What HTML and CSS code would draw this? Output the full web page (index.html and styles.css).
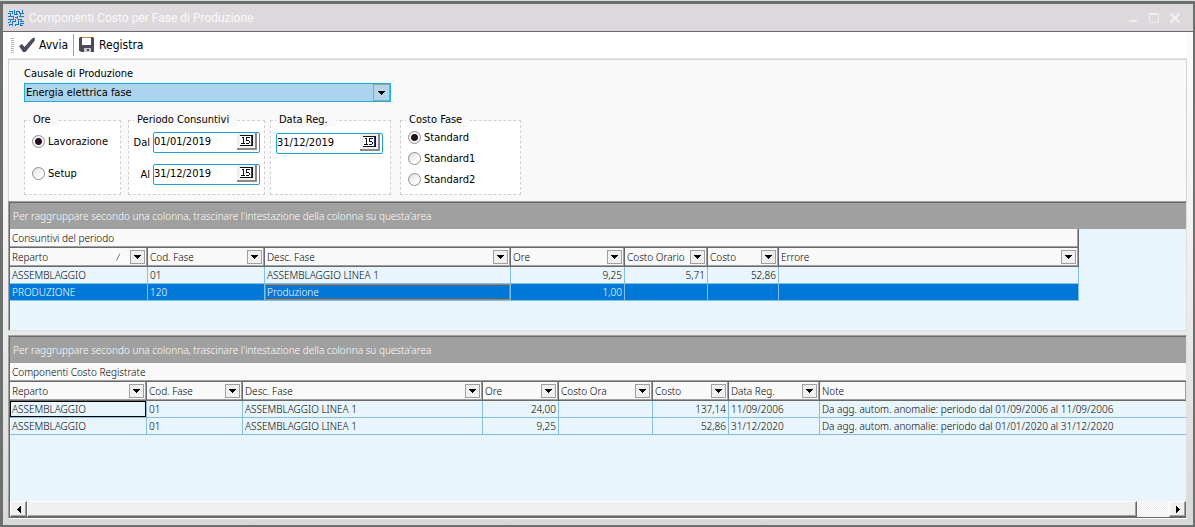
FILE: index.html
```html
<!DOCTYPE html>
<html lang="it">
<head>
<meta charset="utf-8">
<title>Componenti Costo per Fase di Produzione</title>
<link rel="stylesheet" href="styles.css">
</head>
<body>
<svg class="defs" aria-hidden="true">
  <symbol id="down" viewBox="0 0 7 4"><path d="M0 0h7v1h-1v1h-1v1h-1v1h-1v-1h-1v-1h-1v-1h-1z"/></symbol>
  <symbol id="calendar" viewBox="0 0 13 13">
    <g shape-rendering="crispEdges">
      <path fill="#fff" d="M0 1h12v11H0z"/>
      <path fill="#111" d="M0 1h13v1H0zM0 11h13v1H0zM12 1h1v11h-1z"/>
      <path fill="#3a3a78" d="M11 2h1v9h-1z"/>
      <path fill="#111" d="M2 3h2v6h1v1H1V9h2V4H2zM6 3h4v1H7v2h2v1h1v2H9v1H6V9h3V7H6z"/>
    </g>
  </symbol>
</svg>
<div class="window">
  <header class="titlebar">
    <svg class="app-icon" viewBox="0 0 16 16" aria-hidden="true">
      <path fill="none" stroke="#1677d2" shape-rendering="crispEdges" d="M1 1.500h4M4.500 1v3M0 3.500h3M2.500 3v4M0 6.500h5M6.500 0v5M6 4.500h4M8.500 1v4M8 1.500h4M11.500 1v3M14.500 0v4M13 3.500h3M12.500 3v4M7 7.500h3M9.500 6v3M11 6.500h5M5.500 6v4M0 9.500h6M2.500 9v3M0 12.500h2M4.500 11v5M4 11.500h4M7.500 9v3M1 14.500h4M7 14.500h4M7.500 14v2M10.500 10v5M10 9.500h4M13.500 9v3M12 11.500h4M12.500 13v3M12 13.500h4M12 15.500h3M1 15.500h1"/>
    </svg>
    <h1 class="title">Componenti Costo per Fase di Produzione</h1>
    <div class="window-buttons">
      <button class="window-button" aria-label="Riduci a icona"><svg viewBox="0 0 10 10"><path fill="none" stroke="currentColor" stroke-width="2" d="M1 8h8"/></svg></button>
      <button class="window-button" aria-label="Ingrandisci"><svg viewBox="0 0 10 10"><path fill="none" stroke="currentColor" d="M.500 .500h9v9h-9zM0 1.500h10"/></svg></button>
      <button class="window-button" aria-label="Chiudi"><svg viewBox="0 0 10 10"><path fill="none" stroke="currentColor" stroke-width="2.500" d="M.500 .500l9 9M9.500 .500l-9 9"/></svg></button>
    </div>
  </header>

  <div class="client">
    <div class="toolbar">
      <span class="grip"></span>
      <button class="tool"><svg class="tool-icon" viewBox="0 0 16 16" aria-hidden="true"><path fill="#4c4b5e" d="M0 9l3-2 2.500 3L13 1.500l3-1L15.500 4 6.500 15H4z"/></svg>Avvia</button>
      <span class="divider"></span>
      <button class="tool"><svg class="tool-icon" viewBox="0 0 16 16" aria-hidden="true"><path fill="#4c4b5e" d="M1 0h13l1 1v14H2l-1-1H0V1z"/><path fill="#fff" d="M3 1h9v7H3z"/><path fill="#d98c2f" d="M3 0h9v1H3z"/><path fill="#c8c8d0" d="M5 11h7v4H5z"/><path fill="#4c4b5e" d="M8 12h2v2H8z"/></svg>Registra</button>
    </div>

    <form class="filters">
      <div class="cause">
        <label for="cause">Causale di Produzione</label>
        <div class="combo">
          <select id="cause" class="combo-box"><option>Energia elettrica fase</option></select>
          <span class="drop combo-drop"><svg class="arrow"><use href="#down"/></svg></span>
        </div>
      </div>
      <div class="groups">
        <fieldset class="group group-hours">
          <legend>Ore</legend>
          <label class="choice"><input class="radio" type="radio" name="hours" checked>Lavorazione</label>
          <label class="choice"><input class="radio" type="radio" name="hours">Setup</label>
        </fieldset>
        <fieldset class="group group-period">
          <legend>Periodo Consuntivi</legend>
          <div class="period-row"><label for="from">Dal</label><span class="date"><input id="from" class="date-text" type="text" value="01/01/2019"><button type="button" class="date-button" aria-label="Calendario"><svg class="cal"><use href="#calendar"/></svg></button></span></div>
          <div class="period-row"><label for="to">Al</label><span class="date"><input id="to" class="date-text" type="text" value="31/12/2019"><button type="button" class="date-button" aria-label="Calendario"><svg class="cal"><use href="#calendar"/></svg></button></span></div>
        </fieldset>
        <fieldset class="group group-date">
          <legend>Data Reg.</legend>
          <span class="date"><input class="date-text" type="text" value="31/12/2019" aria-label="Data Reg."><button type="button" class="date-button" aria-label="Calendario"><svg class="cal"><use href="#calendar"/></svg></button></span>
        </fieldset>
        <fieldset class="group group-cost">
          <legend>Costo Fase</legend>
          <label class="choice"><input class="radio" type="radio" name="cost" checked>Standard</label>
          <label class="choice"><input class="radio" type="radio" name="cost">Standard1</label>
          <label class="choice"><input class="radio" type="radio" name="cost">Standard2</label>
        </fieldset>
      </div>
    </form>

    <section class="grid">
      <div class="group-bar">Per raggruppare secondo una colonna, trascinare l'intestazione della colonna su questa'area</div>
      <div class="grid-body">
        <table class="data period-table">
          <caption>Consuntivi del periodo</caption>
          <colgroup><col class="w138"><col class="w117"><col class="w246"><col class="w114"><col class="w83"><col class="w71"><col class="w300"></colgroup>
          <thead><tr>
            <th><div class="head"><span>Reparto</span><svg class="sort" viewBox="0 0 9 8" aria-hidden="true"><path fill="none" stroke="#fff" d="M4.500 0l4 7.500H0"/><path fill="none" stroke="#777" d="M.500 7.500L4 .500"/></svg><button class="drop" aria-label="Filtra Reparto"><svg class="arrow"><use href="#down"/></svg></button></div></th>
            <th><div class="head"><span>Cod. Fase</span><button class="drop" aria-label="Filtra Cod. Fase"><svg class="arrow"><use href="#down"/></svg></button></div></th>
            <th><div class="head"><span>Desc. Fase</span><button class="drop" aria-label="Filtra Desc. Fase"><svg class="arrow"><use href="#down"/></svg></button></div></th>
            <th><div class="head"><span>Ore</span><button class="drop" aria-label="Filtra Ore"><svg class="arrow"><use href="#down"/></svg></button></div></th>
            <th><div class="head"><span>Costo Orario</span><button class="drop" aria-label="Filtra Costo Orario"><svg class="arrow"><use href="#down"/></svg></button></div></th>
            <th><div class="head"><span>Costo</span><button class="drop" aria-label="Filtra Costo"><svg class="arrow"><use href="#down"/></svg></button></div></th>
            <th><div class="head"><span>Errore</span><button class="drop" aria-label="Filtra Errore"><svg class="arrow"><use href="#down"/></svg></button></div></th>
          </tr></thead>
          <tbody>
            <tr><td>ASSEMBLAGGIO</td><td>01</td><td>ASSEMBLAGGIO LINEA 1</td><td class="num">9,25</td><td class="num">5,71</td><td class="num">52,86</td><td></td></tr>
            <tr class="selected"><td>PRODUZIONE</td><td>120</td><td class="editing">Produzione</td><td class="num">1,00</td><td></td><td></td><td></td></tr>
          </tbody>
        </table>
      </div>
    </section>

    <section class="grid grid-last">
      <div class="group-bar">Per raggruppare secondo una colonna, trascinare l'intestazione della colonna su questa'area</div>
      <div class="grid-body">
        <table class="data posted-table">
          <caption>Componenti Costo Registrate</caption>
          <colgroup><col class="w137"><col class="w96"><col class="w240"><col class="w76"><col class="w94"><col class="w76"><col class="w91"><col></colgroup>
          <thead><tr>
            <th><div class="head"><span>Reparto</span><button class="drop" aria-label="Filtra Reparto"><svg class="arrow"><use href="#down"/></svg></button></div></th>
            <th><div class="head"><span>Cod. Fase</span><button class="drop" aria-label="Filtra Cod. Fase"><svg class="arrow"><use href="#down"/></svg></button></div></th>
            <th><div class="head"><span>Desc. Fase</span><button class="drop" aria-label="Filtra Desc. Fase"><svg class="arrow"><use href="#down"/></svg></button></div></th>
            <th><div class="head"><span>Ore</span><button class="drop" aria-label="Filtra Ore"><svg class="arrow"><use href="#down"/></svg></button></div></th>
            <th><div class="head"><span>Costo Ora</span><button class="drop" aria-label="Filtra Costo Ora"><svg class="arrow"><use href="#down"/></svg></button></div></th>
            <th><div class="head"><span>Costo</span><button class="drop" aria-label="Filtra Costo"><svg class="arrow"><use href="#down"/></svg></button></div></th>
            <th><div class="head"><span>Data Reg.</span><button class="drop" aria-label="Filtra Data Reg."><svg class="arrow"><use href="#down"/></svg></button></div></th>
            <th><div class="head"><span>Note</span></div></th>
          </tr></thead>
          <tbody>
            <tr><td class="focused">ASSEMBLAGGIO</td><td>01</td><td>ASSEMBLAGGIO LINEA 1</td><td class="num">24,00</td><td></td><td class="num">137,14</td><td>11/09/2006</td><td>Da agg. autom. anomalie: periodo dal 01/09/2006 al 11/09/2006</td></tr>
            <tr><td>ASSEMBLAGGIO</td><td>01</td><td>ASSEMBLAGGIO LINEA 1</td><td class="num">9,25</td><td></td><td class="num">52,86</td><td>31/12/2020</td><td>Da agg. autom. anomalie: periodo dal 01/01/2020 al 31/12/2020</td></tr>
          </tbody>
        </table>
      </div>
      <div class="scrollbar">
        <button class="scroll-button" aria-label="Scorri a sinistra"><svg class="scroll-arrow" viewBox="0 0 4 7"><path d="M4 0v7h-1v-1h-1v-1h-1v-1h-1v-1h1v-1h1v-1h1v-1z"/></svg></button>
        <span class="thumb"></span><span class="track"></span>
        <button class="scroll-button" aria-label="Scorri a destra"><svg class="scroll-arrow" viewBox="0 0 4 7"><path d="M0 0v7h1v-1h1v-1h1v-1h1v-1h-1v-1h-1v-1h-1v-1z"/></svg></button>
      </div>
    </section>
  </div>
</div>
</body>
</html>
```
FILE: styles.css
```css
* { box-sizing: border-box; }

body {
  display: flex;
  flex-direction: column;
  min-height: 100vh;
  margin: 0;
  border-top: 1px solid #d8dad9;
  color: #000;
  font: 11px/14px "DejaVu Sans Condensed", "DejaVu Sans", sans-serif;
}

button, input, select { font: inherit; color: inherit; margin: 0; padding: 0; border-radius: 0; }
button { border: 0; background: none; }
svg { display: block; flex: none; }
.defs { position: absolute; width: 0; height: 0; }

/* Window frame */
.window {
  display: flex;
  flex-direction: column;
  flex: 1;
  border: solid #6c706e;
  border-width: 3px 2px 2px 3px;
}

.titlebar {
  display: flex;
  align-items: center;
  height: 28px;
  padding: 0 13px 0 5px;
  border-bottom: 1px solid #6c686c;
  background: #ddd8dc;
}
.app-icon { width: 16px; height: 16px; }
.title { flex: 1; margin: 0 0 0 5px; color: #faf8fa; font: 400 12px/16px Roboto, sans-serif; }
.window-buttons { display: flex; gap: 11px; color: #eef0f0; }
.window-button { width: 10px; height: 10px; }

.client {
  display: flex;
  flex-direction: column;
  flex: 1;
  padding: 0 6px 6px 5px;
  background: linear-gradient(#fbfbfb, #f4f4f4 35%, #d9d9d9);
}

/* Toolbar */
.toolbar {
  display: flex;
  align-items: center;
  height: 27px;
  padding-left: 3px;
  border-bottom: 1px solid #e6e6e6;
  background: #fff;
}
.grip { width: 3px; height: 15px; background: repeating-linear-gradient(#b4b4b4 0 1px, #fff 1px 2px); }
.tool { display: flex; align-items: center; gap: 4px; height: 24px; padding: 0 5px; font-size: 12px; }
.tool-icon { width: 16px; height: 16px; }
.divider { width: 1px; height: 22px; background: #a0a0a0; }

/* Filters */
.filters {
  display: flex;
  flex-direction: column;
  gap: 11px;
  padding: 7px 16px 6px 15px;
  border: solid #d4d4d4;
  border-width: 1px 1px 0;
  background: #f9f9f9;
}
.cause { display: flex; flex-direction: column; align-items: flex-start; gap: 2px; }
.combo { display: grid; align-items: center; width: 367px; }
.combo-box {
  grid-area: 1 / 1;
  appearance: none;
  width: 100%;
  height: 19px;
  padding-left: 1px;
  border: 1px solid #1badd9;
  background: #add4ee;
}

.drop {
  display: flex;
  align-items: center;
  justify-content: center;
  flex: none;
  width: 15px;
  height: 14px;
  border: 1px solid #a0a0a0;
  background: #f0f0f0;
}
.combo-drop {
  grid-area: 1 / 1;
  justify-self: end;
  width: 17px;
  height: 17px;
  margin-right: 1px;
  background: #b4d4ea;
  pointer-events: none;
}
.arrow { width: 7px; height: 4px; }

.groups { display: flex; }
.group {
  display: flex;
  flex-direction: column;
  height: 82px;
  min-width: 0;
  margin: 0;
  padding: 0 5px;
  border: 1px dashed #cfcfcf;
  background: #fff;
}
.group legend { padding: 0 8px 0 3px; background: #f9f9f9; }
.group-hours { width: 97px; gap: 11px; margin-right: 7px; padding-top: 4px; }
.group-period { width: 137px; gap: 11px; margin-right: 5px; padding-top: 5px; }
.group-date { width: 121px; margin-right: 9px; padding-top: 6px; }
.group-cost { width: 121px; }

.choice { display: flex; align-items: center; gap: 3px; height: 21px; padding-left: 2px; }
.radio {
  appearance: none;
  width: 13px;
  height: 13px;
  border: 1px solid #8e8e8e;
  border-radius: 50%;
  background: linear-gradient(135deg, #ddd, #fff 70%);
}
.radio:checked { background: radial-gradient(circle, #24101e 0 3px, #f4f4f4 4px); }

.period-row { display: flex; justify-content: flex-end; align-items: center; gap: 3px; }
.date {
  display: flex;
  width: 107px;
  height: 21px;
  padding: 0 2px 2px 0;
  border: 1px solid #1ba4d3;
  border-radius: 2px;
  background: #fff;
}
.date-text { flex: 1; min-width: 0; border: 0; background: none; }
.group-period .date { margin-right: -1px; }
.date-button {
  display: flex;
  align-items: center;
  justify-content: center;
  width: 20px;
  border: solid #8a8a8a;
  border-width: 0 2px 2px 0;
  background: #f0f0f0;
}
.cal { width: 13px; height: 13px; }

/* Data grids */
.grid {
  display: flex;
  flex-direction: column;
  margin-bottom: 4px;
  border: 1px solid #e0e0e0;
  border-top-color: #a0a0a0;
  border-left-color: #a0a0a0;
  background: #e9f5fc;
  font: 300 10px/14px "Noto Sans", sans-serif;
}
.grid-last { flex: 1; margin-bottom: 0; border-bottom-color: #fff; }
.group-bar {
  height: 27px;
  padding: 1px 3px;
  border-top: 1px solid #696969;
  border-left: 1px solid #696969;
  background: #a0a0a0;
  color: #fff;
  line-height: 25px;
}
.grid-body { min-height: 101px; border-left: 1px solid #696969; overflow: hidden; }
.grid-last .grid-body { flex: 1; }

.data { table-layout: fixed; border-collapse: separate; border-spacing: 0; }
.period-table { width: 1069px; }
.posted-table { width: 100%; }
.w71 { width: 71px; }
.w76 { width: 76px; }
.w83 { width: 83px; }
.w91 { width: 91px; }
.w94 { width: 94px; }
.w96 { width: 96px; }
.w114 { width: 114px; }
.w117 { width: 117px; }
.w137 { width: 137px; }
.w138 { width: 138px; }
.w240 { width: 240px; }
.w246 { width: 246px; }
.w300 { width: 300px; }

.data caption, .data th {
  height: 19px;
  border-bottom: 1px solid #696969;
  box-shadow: inset 0 -1px #a0a0a0;
  background: #f9f9f9;
  text-align: left;
}
.data caption { padding: 2px 2px 1px; }
.data th { padding: 0 2px; border-right: 1px solid #696969; box-shadow: inset -1px -1px #a0a0a0; font-weight: 300; }
.period-table caption { border-right: 1px solid #696969; box-shadow: inset -1px -1px #a0a0a0; }
.posted-table caption, .posted-table tr > :last-child { border-right: 0; }
.head { display: flex; align-items: center; height: 17px; }
.head span { flex: 1; white-space: nowrap; }
.sort { width: 9px; height: 8px; margin-right: 5px; }

.data td {
  height: 17px;
  padding: 0 2px;
  border: solid #84bde6;
  border-width: 0 1px 1px 0;
  line-height: 16px;
  white-space: nowrap;
  overflow: hidden;
}
.data .num { text-align: right; }
.selected td { background: #0078d8; color: #fff; }
.data .editing { box-shadow: inset 0 0 0 1px #c07c34; }
.data .focused { box-shadow: inset 0 0 0 1px #000; }

/* Horizontal scroll bar */
.scrollbar {
  display: flex;
  height: 17px;
  border-left: 1px solid #696969;
  border-bottom: 1px solid #696969;
  background: repeating-conic-gradient(#ececec 0 25%, #fff 0 50%) 0 0 / 2px 2px;
}
.scroll-button, .thumb {
  border: 1px solid #fff;
  border-right-color: #696969;
  border-bottom-color: #696969;
  background: #f0f0f0;
  box-shadow: inset -1px -1px #a0a0a0;
}
.scroll-button { display: flex; align-items: center; justify-content: center; flex: none; width: 17px; }
.scroll-arrow { width: 4px; height: 7px; }
.thumb { flex: 1110; }
.track { flex: 32; }
```
